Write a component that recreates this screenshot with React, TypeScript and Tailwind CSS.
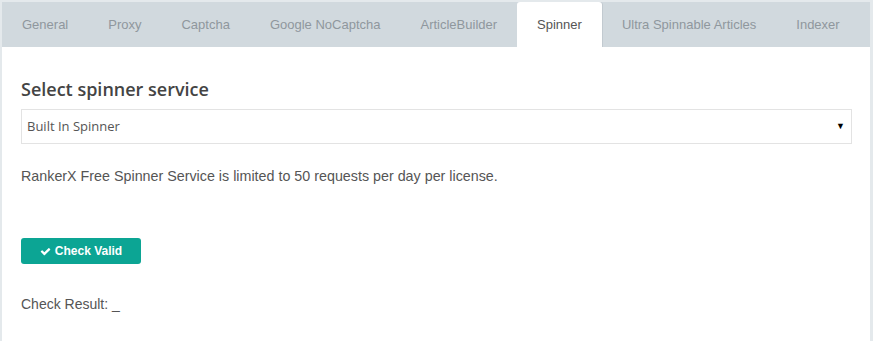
const tabs = ['General', 'Proxy', 'Captcha', 'Google NoCaptcha', 'ArticleBuilder', 'Spinner', 'Ultra Spinnable Articles', 'Indexer'];

function CheckIcon() {
  return (
    <svg viewBox="0 0 1792 1792" className="h-[11px] w-[11px] fill-white">
      <path d="M1671 566q0 40-28 68l-724 724-136 136q-28 28-68 28t-68-28l-136-136-362-362q-28-28-28-68t28-68l136-136q28-28 68-28t68 28l294 295 656-657q28-28 68-28t68 28l136 136q28 28 28 68z" />
    </svg>
  );
}

export default function App() {
  return (
    <main className="h-[341px] w-[873px] bg-[#e4e9ec] pt-[2px] pl-[2px] pr-[3px] font-['Liberation_Sans',Arial,sans-serif]">
      {/* Tabs */}
      <div className="flex h-[45px] bg-[#d1d9de]">
        {tabs.map((t) => (
          <div
            key={t}
            className={
              t === 'Spinner'
                ? 'flex items-center px-5 bg-white rounded-t-[3px] text-[13px] text-[#555] shadow-[1px_0_0_#c2cad0]'
                : 'flex items-center px-5 text-[13px] text-[#8f979d]'
            }
          >
            {t}
          </div>
        ))}
      </div>

      {/* Panel */}
      <div className="h-[294px] bg-white px-[19px] pt-[30px]">
        <h2 className="font-['Open_Sans',sans-serif] text-[18px] font-semibold text-[#444] leading-[24px]">
          Select spinner service
        </h2>
        <div className="mt-[8px] flex h-[35px] w-[831px] items-center justify-between border border-[#e3e3e3] pl-[5px] pr-[6px]">
          <span className="font-['Open_Sans',sans-serif] text-[13px] text-[#555]">Built In Spinner</span>
          <span className="text-[9px] text-black">▼</span>
        </div>
        <p className="mt-[22px] text-[14.3px] text-[#555] leading-[20px]">
          RankerX Free Spinner Service is limited to 50 requests per day per license.
        </p>
        <button className="mt-[52px] flex h-[26px] w-[120px] items-center justify-center gap-[4px] rounded-[3px] bg-[#0ca594] text-[12px] font-bold text-white">
          <CheckIcon />
          Check Valid
        </button>
        <p className="mt-[30px] text-[14px] text-[#555] leading-[20px]">Check Result: _</p>
      </div>
    </main>
  );
}
